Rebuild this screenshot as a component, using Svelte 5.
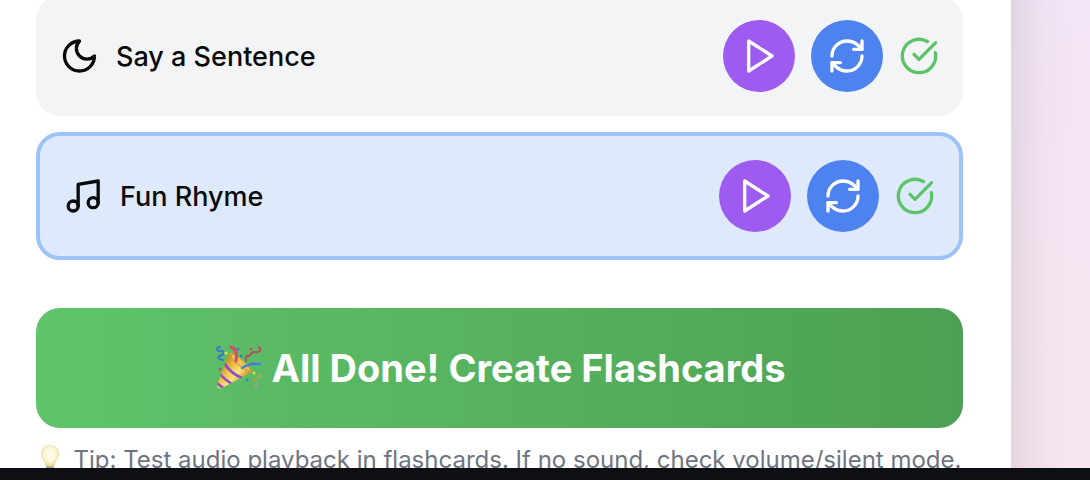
<script>
  const activities = [
    { id: 'sentence', label: 'Say a Sentence', icon: 'moon', active: false },
    { id: 'rhyme', label: 'Fun Rhyme', icon: 'music', active: true },
  ];
</script>

<div class="screen">
  <div class="body">
    <main class="card">
      <ul class="list">
        {#each activities as item (item.id)}
          <li class="row" class:active={item.active}>
            <svg class="icon" viewBox="0 0 24 24" aria-hidden="true">
              {#if item.icon === 'moon'}
                <path d="M11.7 3a6 6 0 0 0 9 9 9 9 0 1 1-9-9Z" />
              {:else}
                <path d="M8.5 18V5l12-2v13" />
                <circle cx="5.5" cy="18" r="3" />
                <circle cx="17.5" cy="16" r="3" />
              {/if}
            </svg>
            <span class="label">{item.label}</span>
            <button class="round play" type="button" aria-label="Play">
              <svg class="icon" viewBox="0 0 24 24" aria-hidden="true">
                <polygon points="5.8 3 19.8 12 5.8 21 5.8 3" />
              </svg>
            </button>
            <button class="round redo" type="button" aria-label="Record again">
              <svg class="icon" viewBox="0 0 24 24" aria-hidden="true">
                <path d="M3 12a9 9 0 0 1 9-9 9.75 9.75 0 0 1 6.74 2.74L21 8" />
                <path d="M21 3v5h-5" />
                <path d="M21 12a9 9 0 0 1-9 9 9.75 9.75 0 0 1-6.74-2.74L3 16" />
                <path d="M8 16H3v5" />
              </svg>
            </button>
            <svg class="icon done" viewBox="0 0 24 24" aria-hidden="true">
              <path d="M21.801 10A10 10 0 1 1 17 3.335" />
              <path d="m9 11 3 3L22 4" />
            </svg>
          </li>
        {/each}
      </ul>

      <button class="create" type="button">
        <svg class="popper" viewBox="0 0 48 48" aria-hidden="true">
          <defs>
            <linearGradient id="cone" x1="8" y1="22" x2="27" y2="38" gradientUnits="userSpaceOnUse">
              <stop offset="0" stop-color="#c8942f" />
              <stop offset="0.35" stop-color="#f0c34c" />
              <stop offset="0.65" stop-color="#fbe27a" />
              <stop offset="1" stop-color="#cf9a34" />
            </linearGradient>
            <clipPath id="coneShape">
              <path d="M15 9 C19 7 37 22 38 28 L8 44 Q3 46 3 41Z" />
            </clipPath>
          </defs>
          <path d="M15 9 C19 7 37 22 38 28 L8 44 Q3 46 3 41Z" fill="url(#cone)" />
          <g clip-path="url(#coneShape)" fill="none" stroke="#8d49cf" stroke-width="2.6">
            <path d="M10 19Q17 30 30 35" />
            <path d="M6 30Q12 37 20 41" />
            <path d="M2 38Q6 42 11 45" />
          </g>
          <path d="M15 9C13 12 31 30 38 28C37 22 19 7 15 9Z" fill="#d3a13a" />
          <path d="M18 11C16 14 31 27 36 26C31 19 23 11 18 11Z" fill="#edc358" />
          <g fill="none" stroke-linecap="round">
            <path d="M17 3Q24 5 22 17" stroke="#d64e62" stroke-width="3" />
            <path d="M28 24Q36 19 46 20" stroke="#487cdb" stroke-width="2.5" />
            <path d="M6 3C1 4 3 8 7 7S10 11 6 12S6 16 9 16" stroke="#3974c9" stroke-width="2" />
            <path d="M45 3C49 7 43 9 40 8S37 13 34 12S32 14 32 17" stroke="#b74e62" stroke-width="2" />
          </g>
          <g>
            <circle cx="24" cy="5" r="1.5" fill="#407ac9" />
            <circle cx="37" cy="5" r="1.5" fill="#bd5067" />
            <circle cx="27" cy="12" r="1.5" fill="#3979c9" />
            <circle cx="12" cy="9" r="1.5" fill="#efd957" />
            <circle cx="6" cy="25" r="1.5" fill="#bd5367" />
            <circle cx="40" cy="29" r="1.5" fill="#e6d64c" />
            <circle cx="45" cy="32" r="1.5" fill="#d89e42" />
            <circle cx="33" cy="36" r="1.5" fill="#3e80b9" />
            <circle cx="41" cy="36" r="1.5" fill="#d48e46" />
            <circle cx="42" cy="41" r="1.5" fill="#c88da3" />
          </g>
        </svg>
        <span>All Done! Create Flashcards</span>
      </button>

      <p class="tip">
        <svg class="bulb" viewBox="0 0 24 32" aria-hidden="true">
          <defs>
            <radialGradient id="glow" cx="0.5" cy="0.45" r="0.55">
              <stop offset="0" stop-color="#fffef8" />
              <stop offset="0.6" stop-color="#fdf6d8" />
              <stop offset="1" stop-color="#ecd68c" />
            </radialGradient>
          </defs>
          <path d="M12 1C6 1 3 5 3 10C3 15 7 17 7.5 22H16.5C17 17 21 15 21 10C21 5 18 1 12 1Z" fill="url(#glow)" />
          <path d="M8 22h8v6q-4 3-8 0Z" fill="#b9b9bb" />
          <path d="M8 24h8M8 27h8" stroke="#8e8f93" />
        </svg>
        <span>Tip: Test audio playback in flashcards. If no sound, check volume/silent mode.</span>
      </p>
    </main>
    <div class="backdrop"></div>
  </div>
  <div class="edge"></div>
</div>

<style>
  :global(body) {
    margin: 0;
  }
  .screen {
    display: flex;
    flex-direction: column;
    height: 100vh;
    overflow: hidden;
    font-family: Inter, "Liberation Sans", sans-serif;
  }
  .body {
    display: flex;
    flex: 1;
    min-height: 0;
    overflow: hidden;
  }
  .card {
    flex: 1;
    min-width: 0;
    box-sizing: border-box;
    padding: 0 48px 0 36px;
    background: #fff;
  }
  .backdrop {
    flex: 0 0 79px;
    background:
      linear-gradient(90deg, rgba(0, 0, 0, 0.07), rgba(0, 0, 0, 0.035) 20px, rgba(0, 0, 0, 0.01) 40px, transparent 60px),
      linear-gradient(#f2e5f5, #f5e5f2 50%, #f7e5f0);
  }
  .edge {
    flex: 0 0 12px;
    background: #0e0f14;
  }
  .list {
    display: flex;
    flex-direction: column;
    gap: 16px;
    margin: -4px 0 48px;
    padding: 0;
    list-style: none;
  }
  .row {
    display: flex;
    align-items: center;
    gap: 16px;
    padding: 24px;
    border-radius: 24px;
    background: #f3f4f6;
    color: #0a0a0a;
  }
  .row.active {
    border: 4px solid #9bc3f9;
    background: #dee9fb;
  }
  .icon {
    flex: none;
    display: block;
    width: 40px;
    height: 40px;
    fill: none;
    stroke: currentColor;
    stroke-width: 2;
    stroke-linecap: round;
    stroke-linejoin: round;
  }
  .label {
    flex: 1;
    padding-top: 2px;
    font-size: 27px;
    font-weight: 500;
    line-height: 40px;
  }
  .round {
    padding: 16px;
    border: 0;
    border-radius: 50%;
    color: #fff;
  }
  .play {
    background: #9d5bf0;
  }
  .redo {
    background: #4e82ee;
  }
  .done {
    color: #5dc368;
  }
  .create {
    display: flex;
    align-items: center;
    justify-content: center;
    gap: 10px;
    width: 100%;
    padding: 32px;
    border: 0;
    border-radius: 24px;
    background: linear-gradient(90deg, #5fc46a, #4da053);
    color: #fff;
    font-family: inherit;
    font-size: 38px;
    font-weight: 700;
    line-height: 56px;
  }
  .popper {
    flex: none;
    width: 48px;
    height: 48px;
  }
  .tip {
    display: flex;
    align-items: center;
    justify-content: center;
    gap: 12px;
    margin: 16px 0 0;
    color: #6c7482;
    font-size: 24px;
    line-height: 32px;
    white-space: nowrap;
  }
  .bulb {
    flex: none;
    width: 24px;
    height: 32px;
  }
</style>
